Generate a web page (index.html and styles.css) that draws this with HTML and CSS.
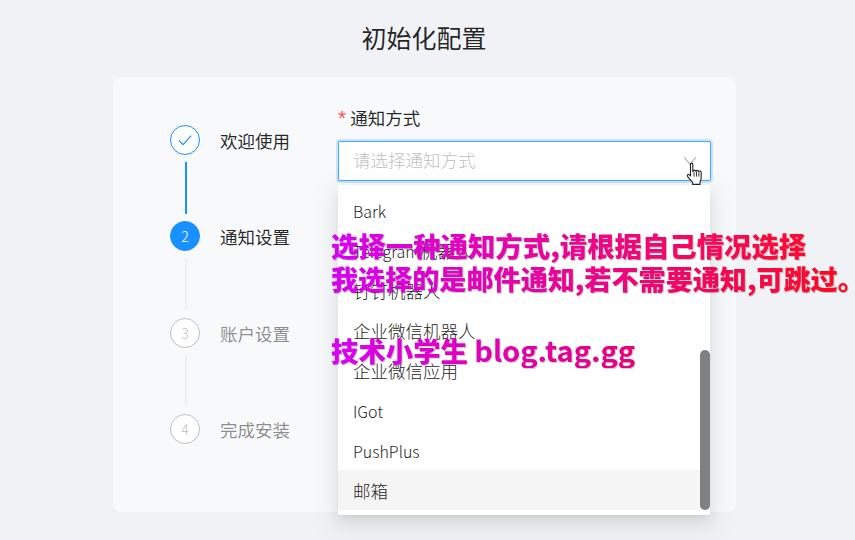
FILE: index.html
```html
<!DOCTYPE html>
<html lang="zh-CN">
<head>
  <meta charset="UTF-8" />
  <meta name="viewport" content="width=device-width, initial-scale=1.0"/>
  <title>初始化配置</title>
  <link rel="stylesheet" href="styles.css">
</head>
<body>
  <div class="page">
    <h1 class="title">初始化配置</h1>
    <div class="card">
      <div class="steps">
        <div class="step done">
          <div class="step-side">
            <span class="step-icon">
              <svg width="16" height="16" viewBox="0 0 16 16" fill="none" stroke="#1890ff" stroke-width="1.2"><path d="M1.8 8.4 6 12.6 14.2 3.6"/></svg>
            </span>
            <span class="step-tail"></span>
          </div>
          <span class="step-name">欢迎使用</span>
        </div>
        <div class="step active">
          <div class="step-side">
            <span class="step-icon">2</span>
            <span class="step-tail"></span>
          </div>
          <span class="step-name">通知设置</span>
        </div>
        <div class="step">
          <div class="step-side">
            <span class="step-icon">3</span>
            <span class="step-tail"></span>
          </div>
          <span class="step-name">账户设置</span>
        </div>
        <div class="step">
          <div class="step-side">
            <span class="step-icon">4</span>
          </div>
          <span class="step-name">完成安装</span>
        </div>
      </div>
      <div class="form">
        <label class="form-label"><span class="required">*</span>通知方式</label>
        <div class="select">
          <span class="placeholder">请选择通知方式</span>
          <svg class="arrow" width="14" height="10" viewBox="0 0 14 10" fill="none" stroke="#bfbfbf" stroke-width="1.3"><path d="M1 1 7 8.5 13 1"/></svg>
          <svg class="cursor" width="19" height="24" viewBox="0 0 18 24">
            <path d="M5 2.2c0-1.5 2.3-1.5 2.3 0v7.2l.6-.2c.1-1.4 2.1-1.4 2.3 0l.5.1c.2-1.2 2.1-1.2 2.3.1l.5.2c.3-.9 2.1-.8 2.2.6v5.6c0 1.6-.5 2.7-1.2 4.2v2.4H7.2v-2c-1.6-1.6-3.2-3.6-5.2-6-.9-1.2.5-2.6 1.7-1.6L5 13.8z" fill="#fff" stroke="#222" stroke-width="1.1" stroke-linejoin="round"/>
            <path d="M8.6 10v4.6M11 10v4.6M13.4 10.4v4.2" stroke="#222" stroke-width=".9"/>
          </svg>
          <div class="dropdown">
            <div class="option">Bark</div>
            <div class="option">Telegram<span class="cjk">机器人</span></div>
            <div class="option"><span class="cjk">钉钉机器人</span></div>
            <div class="option"><span class="cjk">企业微信机器人</span></div>
            <div class="option"><span class="cjk">企业微信应用</span></div>
            <div class="option">IGot</div>
            <div class="option">PushPlus</div>
            <div class="option hover"><span class="cjk">邮箱</span></div>
            <span class="scrollbar"></span>
          </div>
        </div>
      </div>
    </div>
  </div>
  <div class="notes">
    <p class="note note-a">选择一种通知方式,请根据自己情况选择</p>
    <p class="note note-b">我选择的是邮件通知,若不需要通知,可跳过。</p>
    <p class="note note-c">技术小学生 <span class="note-url">blog.tag.gg</span></p>
  </div>
</body>
</html>
```

FILE: styles.css
```css
* {
  box-sizing: border-box;
}
html, body {
  margin: 0;
  height: 100%;
  overflow: hidden;
}
body {
  background: #f0f2f5;
  font-family: "Noto Sans CJK SC", "Noto Sans", sans-serif;
  font-weight: 300;
  color: rgba(0,0,0,0.85);
  font-size: 16px;
  position: relative;
}
.cjk {
  font-size: 17.5px;
}
.page {
  width: 848px;
}
.title {
  margin: 0;
  height: 77px;
  padding-top: 19px;
  line-height: 36px;
  text-align: center;
  font-size: 25px;
  font-weight: 400;
}
.card {
  width: 623px;
  height: 435px;
  margin: 0 0 0 113px;
  display: flex;
  background: #f8f9fb;
  border-radius: 8px;
  padding: 32px 25px 0 57px;
}
.steps {
  width: 168px;
  padding-top: 16px;
  flex-shrink: 0;
}
.step {
  display: flex;
  gap: 20px;
  height: 96.33px;
}
.step-side {
  width: 30px;
  display: flex;
  flex-direction: column;
  align-items: center;
}
.step-icon {
  width: 30px;
  height: 30px;
  border-radius: 50%;
  border: 1px solid #bfbfbf;
  color: #bfbfbf;
  display: flex;
  align-items: center;
  justify-content: center;
  font-size: 14px;
  background: #fff;
  flex-shrink: 0;
}
.step-tail {
  width: 2px;
  height: 52px;
  margin-top: 7px;
  margin-left: 2px;
  background: #eeeff2;
}
.step-name {
  line-height: 31px;
  font-size: 17.5px;
  font-weight: 400;
  color: rgba(0,0,0,0.45);
}
.step.done .step-icon {
  border-color: #1890ff;
}
.step.done .step-tail {
  background: #1890ff;
}
.step.done .step-name,
.step.active .step-name {
  color: rgba(0,0,0,0.85);
}
.step.active .step-icon {
  background: #1890ff;
  border-color: #1890ff;
  color: #fff;
}
.form {
  flex: 1;
}
.form-label {
  display: block;
  height: 32px;
  line-height: 18px;
  font-size: 17.5px;
  font-weight: 400;
}
.required {
  color: #ff4d4f;
  margin-right: 4px;
  font-size: 21px;
  font-family: "Liberation Sans", sans-serif;
}
.select {
  position: relative;
  height: 40px;
  padding: 0 14px;
  display: flex;
  align-items: center;
  justify-content: space-between;
  background: #fff;
  border: 1px solid #40a9ff;
  border-radius: 2px;
  box-shadow: 0 0 0 2px rgba(24,144,255,0.2);
}
.placeholder {
  color: #bfbfbf;
  font-size: 17.5px;
  line-height: 38px;
  margin-top: -2px;
}
.arrow {
  margin-right: -1px;
}
.cursor {
  position: absolute;
  left: 346px;
  top: 20px;
  z-index: 3;
}
.dropdown {
  position: absolute;
  left: -1px;
  top: 43px;
  width: 372px;
  height: 330px;
  padding: 5px 0;
  background: #fff;
  border-radius: 2px;
  box-shadow: 0 3px 6px -4px rgba(0,0,0,0.12), 0 6px 16px rgba(0,0,0,0.08), 0 9px 28px 8px rgba(0,0,0,0.05);
  overflow: hidden;
}
.option {
  height: 40px;
  line-height: 42px;
  padding: 0 15px;
  color: #262626;
}
.option.hover {
  background: #f5f5f5;
}
.scrollbar {
  position: absolute;
  right: 0;
  top: 165px;
  width: 10px;
  height: 160px;
  background: #808080;
  border-radius: 5px;
}
.notes {
  position: absolute;
  left: 331px;
  top: 227px;
  font-weight: 900;
  z-index: 5;
  white-space: nowrap;
}
.note {
  margin: 0;
  width: max-content;
  line-height: 36px;
  font-size: 27.4px;
  color: transparent;
  -webkit-background-clip: text;
  background-clip: text;
  filter: drop-shadow(1px 1px 0 rgba(0,0,0,0.2));
}
.note-a {
  background-image: linear-gradient(90deg, #d800f5, #ff0a30);
}
.note-b {
  font-size: 27.1px;
  margin-top: -2px;
  background-image: linear-gradient(90deg, #d800f5, #ff0a18);
}
.note-c {
  margin-top: 34px;
  background-image: linear-gradient(90deg, #d800f5, #e8007a);
}
.note-url {
  font-size: 29px;
  font-weight: 700;
}
```
